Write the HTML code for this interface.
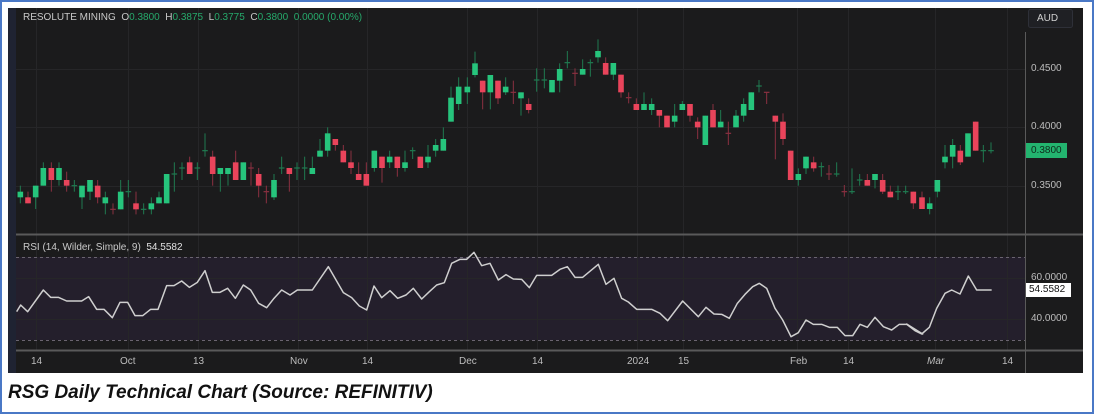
<!DOCTYPE html>
<html><head><meta charset="utf-8">
<style>
html,body{margin:0;padding:0;background:#fff;}
body{width:1094px;height:414px;position:relative;overflow:hidden;font-family:"Liberation Sans",sans-serif;}
#frame{position:absolute;left:0;top:0;width:1090px;height:410px;border:2px solid #4a78c6;}
#chart{position:absolute;left:8px;top:8px;width:1075px;height:365px;background:#1b1b1c;}
.t{position:absolute;font-size:10px;color:#bdbdbd;white-space:nowrap;}
.cap{position:absolute;left:8px;top:382px;font-size:19px;font-weight:bold;font-style:italic;color:#111;white-space:nowrap;}
</style></head><body>
<div id="frame"></div>
<div id="chart"></div>
<svg id="s" width="1094" height="414" style="position:absolute;left:0;top:0">
<rect x="8" y="8" width="8" height="365" fill="#1f2332"/>
<rect x="16" y="257" width="1009" height="83" fill="#241f2c"/>
<g stroke="#262628" stroke-width="1">
<line x1="16" y1="69.5" x2="1025" y2="69.5"/><line x1="16" y1="127.5" x2="1025" y2="127.5"/><line x1="16" y1="186.5" x2="1025" y2="186.5"/>
<line x1="16" y1="278.5" x2="1025" y2="278.5"/><line x1="16" y1="319.5" x2="1025" y2="319.5"/>
<line x1="36.5" y1="8" x2="36.5" y2="350"/><line x1="128.5" y1="8" x2="128.5" y2="350"/><line x1="198.5" y1="8" x2="198.5" y2="350"/><line x1="298.5" y1="8" x2="298.5" y2="350"/><line x1="367.5" y1="8" x2="367.5" y2="350"/><line x1="467.5" y1="8" x2="467.5" y2="350"/><line x1="537.5" y1="8" x2="537.5" y2="350"/><line x1="637.5" y1="8" x2="637.5" y2="350"/><line x1="683.5" y1="8" x2="683.5" y2="350"/><line x1="797.5" y1="8" x2="797.5" y2="350"/><line x1="848.5" y1="8" x2="848.5" y2="350"/><line x1="935.5" y1="8" x2="935.5" y2="350"/><line x1="1007.5" y1="8" x2="1007.5" y2="350"/>
</g>
<line x1="16" y1="257.5" x2="1025" y2="257.5" stroke="#6a6470" stroke-dasharray="3,3"/>
<line x1="16" y1="340.5" x2="1025" y2="340.5" stroke="#6a6470" stroke-dasharray="3,3"/>
<line x1="16" y1="234.5" x2="1083" y2="234.5" stroke="#5a5a5a" stroke-width="2"/>
<line x1="16" y1="350.5" x2="1083" y2="350.5" stroke="#5a5a5a" stroke-width="2"/>
<line x1="1025.5" y1="32" x2="1025.5" y2="373" stroke="#5a5a5a"/>
<g id="cd"></g>
<polyline id="rsi" fill="none" stroke="#cfcfcf" stroke-width="1.5" stroke-linejoin="round"/>
<rect x="1028.5" y="9.5" width="44" height="18" rx="2" fill="#1f2024" stroke="#2e3038"/>
<rect x="1026" y="143" width="41" height="15" fill="#23b46f"/>
<rect x="1026" y="283" width="45" height="14" fill="#fff"/>
</svg>
<div class="t" style="left:23px;top:12px;color:#c9c9c9">RESOLUTE MINING &nbsp;O<span style="color:#26a96b">0.3800</span> &nbsp;H<span style="color:#26a96b">0.3875</span> &nbsp;L<span style="color:#26a96b">0.3775</span> &nbsp;C<span style="color:#26a96b">0.3800</span> &nbsp;<span style="color:#26a96b">0.0000 (0.00%)</span></div>
<div class="t" style="left:1037px;top:13px;color:#d0d0d0">AUD</div>
<div class="t" style="left:1031px;top:63px">0.4500</div>
<div class="t" style="left:1031px;top:121px">0.4000</div>
<div class="t" style="left:1031px;top:145px;color:#0f2a1c">0.3800</div>
<div class="t" style="left:1031px;top:180px">0.3500</div>
<div class="t" style="left:1031px;top:272px">60.0000</div>
<div class="t" style="left:1029px;top:284px;color:#111">54.5582</div>
<div class="t" style="left:1031px;top:313px">40.0000</div>
<div class="t" style="left:23px;top:242px;color:#c9c9c9">RSI (14, Wilder, Simple, 9) &nbsp;<span style="color:#e0e0e0">54.5582</span></div>
<div class="t" style="left:31px;top:356px">14</div>
<div class="t" style="left:120px;top:356px">Oct</div>
<div class="t" style="left:193px;top:356px">13</div>
<div class="t" style="left:290px;top:356px">Nov</div>
<div class="t" style="left:362px;top:356px">14</div>
<div class="t" style="left:459px;top:356px">Dec</div>
<div class="t" style="left:532px;top:356px">14</div>
<div class="t" style="left:627px;top:356px">2024</div>
<div class="t" style="left:678px;top:356px">15</div>
<div class="t" style="left:790px;top:356px">Feb</div>
<div class="t" style="left:843px;top:356px">14</div>
<div class="t" style="left:927px;top:356px;font-style:italic">Mar</div>
<div class="t" style="left:1002px;top:356px">14</div>
<div class="cap">RSG Daily Technical Chart (Source: REFINITIV)</div>
<script>
var A=[[31,455,472,437,490,1],[54,472,490,455,490,0],[77,437,472,437,507,1],[100,384,437,367,437,1],[124,384,420,367,455,0],[147,384,420,367,437,1],[170,420,437,395,455,0],[193,437,437,420,455,1],[216,437,472,437,507,1],[240,420,455,420,480,1],[263,437,472,420,490,0],[286,472,490,455,523,1],[309,508,508,490,523,0],[332,455,508,420,508,1],[355,455,455,420,472,1],[378,490,508,455,523,0],[401,508,508,490,523,1],[424,490,508,472,523,1],[447,472,490,455,490,1],[470,402,490,402,490,1],[493,402,402,367,455,1],[516,384,384,367,420,1],[539,367,402,350,402,0],[562,384,384,367,420,1],[585,332,332,280,350,1],[608,350,402,332,437,0],[631,384,402,384,455,1],[654,384,402,384,437,1],[677,367,420,332,420,0],[700,367,420,367,420,1],[723,384,384,367,437,0],[746,402,437,384,472,0],[769,455,455,437,490,0],[792,420,472,402,480,1],[815,384,384,350,402,1],[838,384,402,384,455,0],[861,384,384,367,420,1],[884,384,384,350,420,1],[907,384,402,350,402,1],[930,332,350,297,350,1],[953,280,332,262,350,1],[976,297,315,297,332,0],[1000,332,367,315,367,0],[1023,367,384,332,402,0],[1046,402,420,367,420,0],[1069,402,437,367,437,0],[1093,332,384,332,395,1],[1116,350,384,350,428,0],[1139,350,367,332,384,1],[1162,350,384,350,410,0],[1185,367,384,332,395,1],[1208,332,332,322,357,1],[1231,350,384,350,384,0],[1254,350,367,315,384,1],[1277,315,332,297,350,1],[1300,297,332,262,332,1],[1323,173,245,140,245,1],[1346,140,192,112,210,1],[1372,140,157,112,192,1],[1395,70,105,35,112,1],[1418,122,157,122,208,0],[1441,105,157,105,208,1],[1464,122,175,122,192,0],[1487,140,157,112,165,1],[1510,157,157,122,192,0],[1533,157,175,157,227,1],[1556,192,210,175,220,0]];
var B=[[50,150,150,115,185,1],[73,150,150,115,175,1],[96,150,187,150,187,1],[119,117,152,100,187,1],[142,98,98,63,115,1],[165,130,130,115,168,0],[188,117,134,88,134,1],[211,98,98,88,140,1],[234,63,82,28,98,1],[257,99,134,82,134,0],[280,99,134,99,150,1],[303,134,187,134,203,0],[326,203,203,187,220,0],[349,222,240,205,240,0],[372,222,240,187,240,1],[395,222,240,205,255,1],[418,240,257,240,292,0],[441,257,292,257,292,0],[464,257,275,222,292,1],[487,222,240,213,240,1],[510,222,257,222,275,0],[533,275,292,262,327,0],[556,257,345,257,345,1],[579,240,292,222,292,0],[602,275,292,240,292,1],[625,310,310,275,345,0],[648,257,292,240,292,1],[671,222,257,205,275,1],[694,187,240,187,240,1],[717,168,168,150,187,1],[740,187,187,187,222,0],[766,257,275,257,388,0],[789,275,327,250,345,0],[812,362,450,362,450,0],[835,432,450,415,467,1],[858,380,415,380,432,1],[881,397,415,380,425,0],[904,410,410,397,440,1],[927,432,432,405,450,0],[950,432,432,397,440,1],[973,485,485,465,500,0],[996,485,485,415,492,1],[1019,450,450,432,467,1],[1042,450,467,432,467,0],[1065,432,450,432,475,1],[1088,450,485,432,492,0],[1111,485,502,467,502,0],[1134,485,485,467,510,1],[1157,485,485,467,492,1],[1180,485,520,485,537,0],[1206,502,537,485,537,0],[1229,520,537,502,553,1],[1252,450,485,450,502,1],[1275,380,397,345,415,1],[1298,345,380,327,415,1],[1321,362,397,345,405,0],[1344,310,380,310,380,1],[1367,275,362,275,362,0],[1390,362,362,345,397,1],[1413,362,362,337,370,1]];
var h='';
function draw(arr,ox,oy){arr.forEach(function(c){var x=ox+c[0]/3,bt=oy+c[1]/3,bb=oy+c[2]/3,wt=oy+c[3]/3,wb=oy+c[4]/3;var up=c[5],col=up?'#26c47c':'#e9445b',wc=up?'#1f7a50':'#8a3040';
h+='<line x1="'+x+'" y1="'+wt+'" x2="'+x+'" y2="'+wb+'" stroke="'+wc+'" stroke-width="1"/>';
if(bb-bt<1.5){h+='<rect x="'+(x-2.8)+'" y="'+(bt-0.6)+'" width="5.6" height="1.2" fill="'+wc+'"/>';}
else h+='<rect x="'+(x-2.8)+'" y="'+bt+'" width="5.6" height="'+(bb-bt)+'" fill="'+col+'"/>';});}
draw(A,10,40);draw(B,520,30);
document.getElementById('cd').innerHTML=h;
var r3=[[50,275],[62,255],[83,275],[130,210],[152,232],[175,232],[200,243],[245,243],[266,230],[290,268],[312,268],[337,293],[360,247],[383,247],[405,287],[428,287],[452,268],[474,268],[500,197],[522,197],[545,183],[568,202],[592,187],[615,152],[637,217],[660,217],[683,205],[706,235],[730,195],[752,210],[776,250],[800,263],[822,235],[845,210],[870,225],[892,210],[937,210],[985,140],[1030,218],[1055,233],[1078,258],[1100,270],[1122,198],[1145,233],[1170,212],[1193,235],[1218,225],[1240,205],[1265,237],[1288,215],[1310,195],[1333,188],[1355,130],[1380,118],[1400,118],[1422,97],[1445,137],[1470,130]];
var r6=[[55,120],[78,104],[100,117],[125,118],[148,143],[170,106],[215,106],[240,88],[262,80],[285,112],[308,112],[355,73],[378,133],[402,115],[425,175],[445,186],[470,208],[515,208],[540,220],[563,242],[608,183],[655,230],[678,202],[702,222],[725,223],[748,235],[772,190],[795,163],[818,140],[838,130],[860,145],[885,205],[908,240],[933,290],[955,278],[978,240],[1000,253],[1025,253],[1048,262],[1072,262],[1095,287],[1118,287],[1140,253],[1162,262],[1185,232],[1210,260],[1235,270],[1258,253],[1280,253],[1305,272],[1328,282]];
var r7=[[20,252],[45,272],[65,282],[88,262],[110,205],[135,160],[155,150],[180,162],[205,108],[230,150],[275,150]];
var pts=[];r3.forEach(function(p){pts.push((p[0]/3)+','+(220+p[1]/3));});r6.forEach(function(p){pts.push((480+p[0]/3)+','+(240+p[1]/3));});r7.forEach(function(p){pts.push((900+p[0]/3)+','+(240+p[1]/3));});
document.getElementById('rsi').setAttribute('points',pts.join(' '));
</script>
</body></html>
